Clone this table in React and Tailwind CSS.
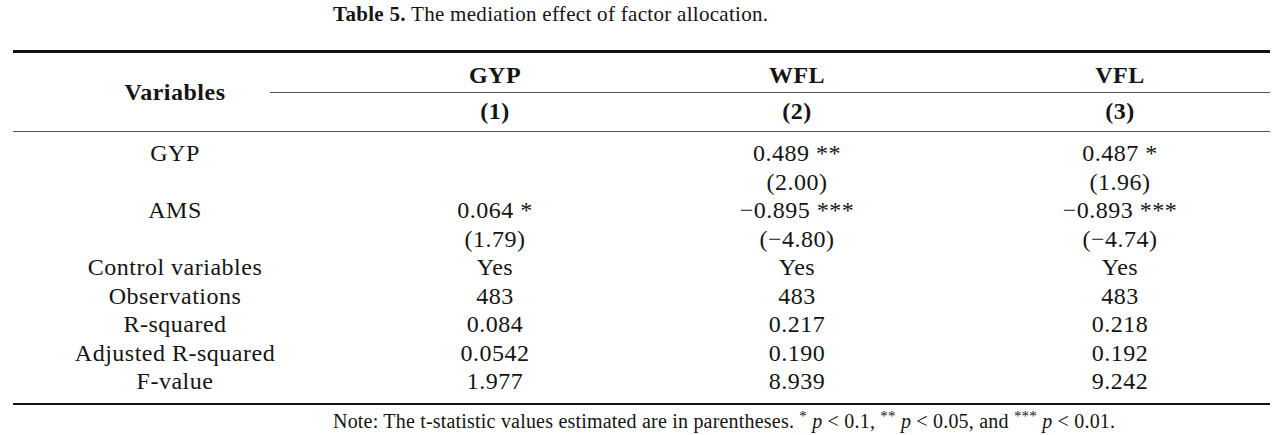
import React from "react";

const rows = [
  ["GYP", "", "0.489 **", "0.487 *"],
  ["", "", "(2.00)", "(1.96)"],
  ["AMS", "0.064 *", "\u22120.895 ***", "\u22120.893 ***"],
  ["", "(1.79)", "(\u22124.80)", "(\u22124.74)"],
  ["Control variables", "Yes", "Yes", "Yes"],
  ["Observations", "483", "483", "483"],
  ["R-squared", "0.084", "0.217", "0.218"],
  ["Adjusted R-squared", "0.0542", "0.190", "0.192"],
  ["F-value", "1.977", "8.939", "9.242"],
];

export default function App() {
  return (
    <div
      className="w-[1280px] h-[435px] bg-white text-[#141414] overflow-hidden"
      style={{ fontFamily: '"Liberation Serif", "Times New Roman", serif' }}
    >
      <div className="h-[28px] leading-[28px] text-[21px] tracking-[0.3px] pl-[333px] whitespace-nowrap">
        <span className="font-bold">Table 5.</span> The mediation effect of factor allocation.
      </div>

      <div className="ml-[13px] w-[1257px] mt-[22px]">
        <div className="h-[2.5px] bg-[#111]" />

        <div className="grid grid-cols-[324px_316px_288px_1fr] grid-rows-[39px_1.5px_37.5px] text-[24px] tracking-[0.5px] font-bold">
          <div className="row-span-3 flex items-center justify-center">Variables</div>
          <div className="flex items-center justify-center pt-[5px]">GYP</div>
          <div className="flex items-center justify-center pt-[5px]">WFL</div>
          <div className="flex items-center justify-center pt-[5px] pl-[29px]">VFL</div>
          <div className="col-span-3 ml-[-67px] bg-[#555]" />
          <div className="flex items-center justify-center pb-[2px]">(1)</div>
          <div className="flex items-center justify-center pb-[2px]">(2)</div>
          <div className="flex items-center justify-center pb-[2px] pl-[29px]">(3)</div>
        </div>

        <div className="h-[1.5px] bg-[#555]" />

        <div className="pt-[7px] pb-[7px] grid grid-cols-[324px_316px_288px_1fr] text-[24px] leading-[28.5px] tracking-[0.5px]">
          {rows.map((r, i) => (
            <React.Fragment key={i}>
              <div className="text-center whitespace-nowrap">{r[0]}</div>
              <div className="text-center whitespace-nowrap">{r[1]}</div>
              <div className="text-center whitespace-nowrap">{r[2]}</div>
              <div className="text-center whitespace-nowrap pl-[29px]">{r[3]}</div>
            </React.Fragment>
          ))}
        </div>

        <div className="h-[2.5px] bg-[#111]" />
      </div>

      <div className="mt-[2px] h-[28px] leading-[28px] text-[20px] tracking-[0.2px] pl-[333px] whitespace-nowrap">
        Note: The t-statistic values estimated are in parentheses. <sup>*</sup> <i>p</i> &lt; 0.1,{" "}
        <sup>**</sup> <i>p</i> &lt; 0.05, and <sup>***</sup> <i>p</i> &lt; 0.01.
      </div>
    </div>
  );
}
